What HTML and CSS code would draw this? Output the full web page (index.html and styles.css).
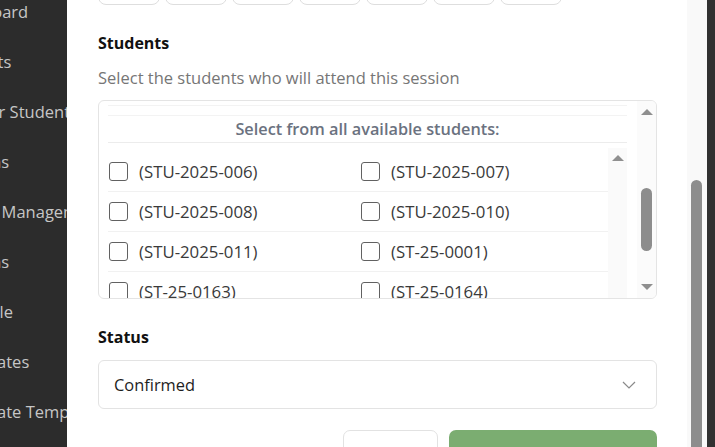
FILE: index.html
```html
<!DOCTYPE html>
<html lang="en">
<head>
<meta charset="utf-8">
<title>Edit Session</title>
<link rel="stylesheet" href="styles.css">
</head>
<body>
<div class="page">
  <nav class="sidebar">
    <div class="nav-item">Dashboard</div>
    <div class="nav-item">Students</div>
    <div class="nav-item">Register Students</div>
    <div class="nav-item">Sessions</div>
    <div class="nav-item">Course Management</div>
    <div class="nav-item">Sessions</div>
    <div class="nav-item">Schedule</div>
    <div class="nav-item">Certificates</div>
    <div class="nav-item">Certificate Templates</div>
  </nav>

  <div class="modal">
    <div class="modal-body">
      <div class="day-row">
        <button class="day-btn">Mon</button>
        <button class="day-btn">Tue</button>
        <button class="day-btn">Wed</button>
        <button class="day-btn">Thu</button>
        <button class="day-btn">Fri</button>
        <button class="day-btn">Sat</button>
        <button class="day-btn">Sun</button>
      </div>

      <div class="field-label students-label">Students</div>
      <div class="field-desc">Select the students who will attend this session</div>

      <div class="picker">
        <div class="picker-main">
          <div class="picker-head">
            <div class="picker-head-inner">Select from all available students:</div>
          </div>
          <div class="picker-list">
            <div class="rows">
              <div class="row">
                <label class="opt"><span class="cb"></span>(STU-2025-006)</label>
                <label class="opt"><span class="cb"></span>(STU-2025-007)</label>
              </div>
              <div class="row">
                <label class="opt"><span class="cb"></span>(STU-2025-008)</label>
                <label class="opt"><span class="cb"></span>(STU-2025-010)</label>
              </div>
              <div class="row">
                <label class="opt"><span class="cb"></span>(STU-2025-011)</label>
                <label class="opt"><span class="cb"></span>(ST-25-0001)</label>
              </div>
              <div class="row">
                <label class="opt"><span class="cb"></span>(ST-25-0163)</label>
                <label class="opt"><span class="cb"></span>(ST-25-0164)</label>
              </div>
            </div>
            <div class="inner-bar">
              <span class="arrow-up"></span>
            </div>
          </div>
        </div>
        <div class="outer-bar">
          <span class="arrow-up"></span>
          <span class="outer-thumb"></span>
          <span class="arrow-down"></span>
        </div>
      </div>

      <div class="field-label status-label">Status</div>
      <div class="select">
        <span>Confirmed</span>
        <svg class="chev" width="14" height="8" viewBox="0 0 14 8"><path d="M1 1l6 6 6-6" fill="none" stroke="#8a8a8a" stroke-width="1.2"/></svg>
      </div>

      <div class="actions">
        <button class="btn btn-cancel">Cancel</button>
        <button class="btn btn-save">Save Session</button>
      </div>
    </div>
    <div class="modal-scroll">
      <span class="modal-thumb"></span>
    </div>
  </div>
  <div class="right-strip"></div>
</div>
</body>
</html>
```

FILE: styles.css
```css
* { box-sizing: border-box; }
html, body { margin: 0; padding: 0; }
body {
  width: 715px;
  height: 447px;
  overflow: hidden;
  background: #2e2e2e;
  font-family: "Open Sans", "Noto Sans", sans-serif;
}
.page {
  display: flex;
  height: 447px;
}
.sidebar {
  width: 67px;
  flex: none;
  overflow: hidden;
  background: #2c2c2c;
}
.nav-item {
  margin-left: -57px;
  white-space: nowrap;
  color: #c6c6c6;
  font-size: 16.5px;
  line-height: 50px;
  height: 50px;
}
.nav-item:first-child { margin-top: -13px; }

.modal {
  width: 640px;
  flex: none;
  background: #fff;
  display: flex;
  overflow: hidden;
}
.modal-body {
  flex: 1;
  padding: 0 30px 0 31px;
  overflow: hidden;
}
.modal-scroll {
  width: 20px;
  flex: none;
  background: #f9f9f9;
  padding: 180px 0 0 4px;
}
.modal-thumb {
  display: block;
  width: 11px;
  height: 300px;
  background: #8d8d8d;
  border-radius: 6px;
}
.right-strip {
  flex: 1;
  background: #313131;
}

.day-row {
  display: flex;
  gap: 5px;
  margin-top: -31px;
}
.day-btn {
  width: 62px;
  height: 36px;
  border: 1px solid #dedede;
  border-radius: 8px;
  background: #fff;
  color: #fff;
  font: 14px "Open Sans", sans-serif;
}

.field-label {
  font-size: 16px;
  font-weight: 700;
  color: #111;
  line-height: 24px;
}
.students-label { margin-top: 26px; }
.field-desc {
  margin-top: 11px;
  font-size: 16.5px;
  line-height: 24px;
  color: #767676;
}

.picker {
  margin-top: 10px;
  height: 199px;
  border: 1px solid #e4e4e4;
  border-radius: 6px;
  display: flex;
  overflow: hidden;
}
.picker-main {
  flex: 1;
  padding: 0 10px 0 9px;
  overflow: hidden;
}
.picker-head {
  margin-top: 4px;
  border-top: 1px solid #f3f3f3;
  padding-top: 9px;
}
.picker-head-inner {
  border-top: 1px solid #f3f3f3;
  border-bottom: 1px solid #ececec;
  line-height: 26px;
  text-align: center;
  font-size: 16.3px;
  font-weight: 600;
  color: #6b7280;
}
.picker-list {
  margin-top: 5px;
  display: flex;
  height: 160px;
}
.rows {
  flex: 1;
  padding-top: 4px;
}
.row {
  display: grid;
  grid-template-columns: 252px 1fr;
  height: 40px;
  align-items: center;
  padding-left: 1px;
  border-bottom: 1px solid #f1f1f1;
}
.opt {
  display: flex;
  align-items: center;
  gap: 11px;
  font-size: 16.8px;
  color: #3a3a3a;
  white-space: nowrap;
}
.cb {
  width: 19px;
  height: 19px;
  border: 1.5px solid #616161;
  border-radius: 3px;
  background: #fff;
  flex: none;
}
.inner-bar {
  width: 19px;
  flex: none;
  background: #fafafa;
  display: flex;
  flex-direction: column;
  align-items: center;
  padding-top: 7px;
}
.outer-bar {
  width: 19px;
  flex: none;
  background: #fbfbfb;
  display: flex;
  flex-direction: column;
  align-items: center;
  padding-top: 8px;
}
.arrow-up {
  width: 0;
  height: 0;
  border-left: 6px solid transparent;
  border-right: 6px solid transparent;
  border-bottom: 6px solid #8f8f8f;
}
.arrow-down {
  width: 0;
  height: 0;
  margin-top: 33px;
  border-left: 6px solid transparent;
  border-right: 6px solid transparent;
  border-top: 6px solid #8f8f8f;
}
.outer-thumb {
  display: block;
  width: 11px;
  height: 63px;
  margin-top: 73px;
  background: #8d8d8d;
  border-radius: 6px;
}

.status-label { margin-top: 26px; }
.select {
  margin-top: 11px;
  height: 49px;
  border: 1px solid #e3e3e3;
  border-radius: 6px;
  display: flex;
  align-items: center;
  justify-content: space-between;
  padding: 0 20px 0 15px;
  font-size: 16.4px;
  color: #1e1e1e;
}

.actions {
  margin-top: 21px;
  display: flex;
  justify-content: flex-end;
  gap: 11px;
}
.btn {
  height: 48px;
  border-radius: 7px;
  font: 15px "Open Sans", sans-serif;
}
.btn-cancel {
  width: 95px;
  background: #fff;
  border: 1px solid #e2e2e2;
  color: #222;
}
.btn-save {
  width: 208px;
  background: #7bad71;
  border: none;
  color: #fff;
}
```
